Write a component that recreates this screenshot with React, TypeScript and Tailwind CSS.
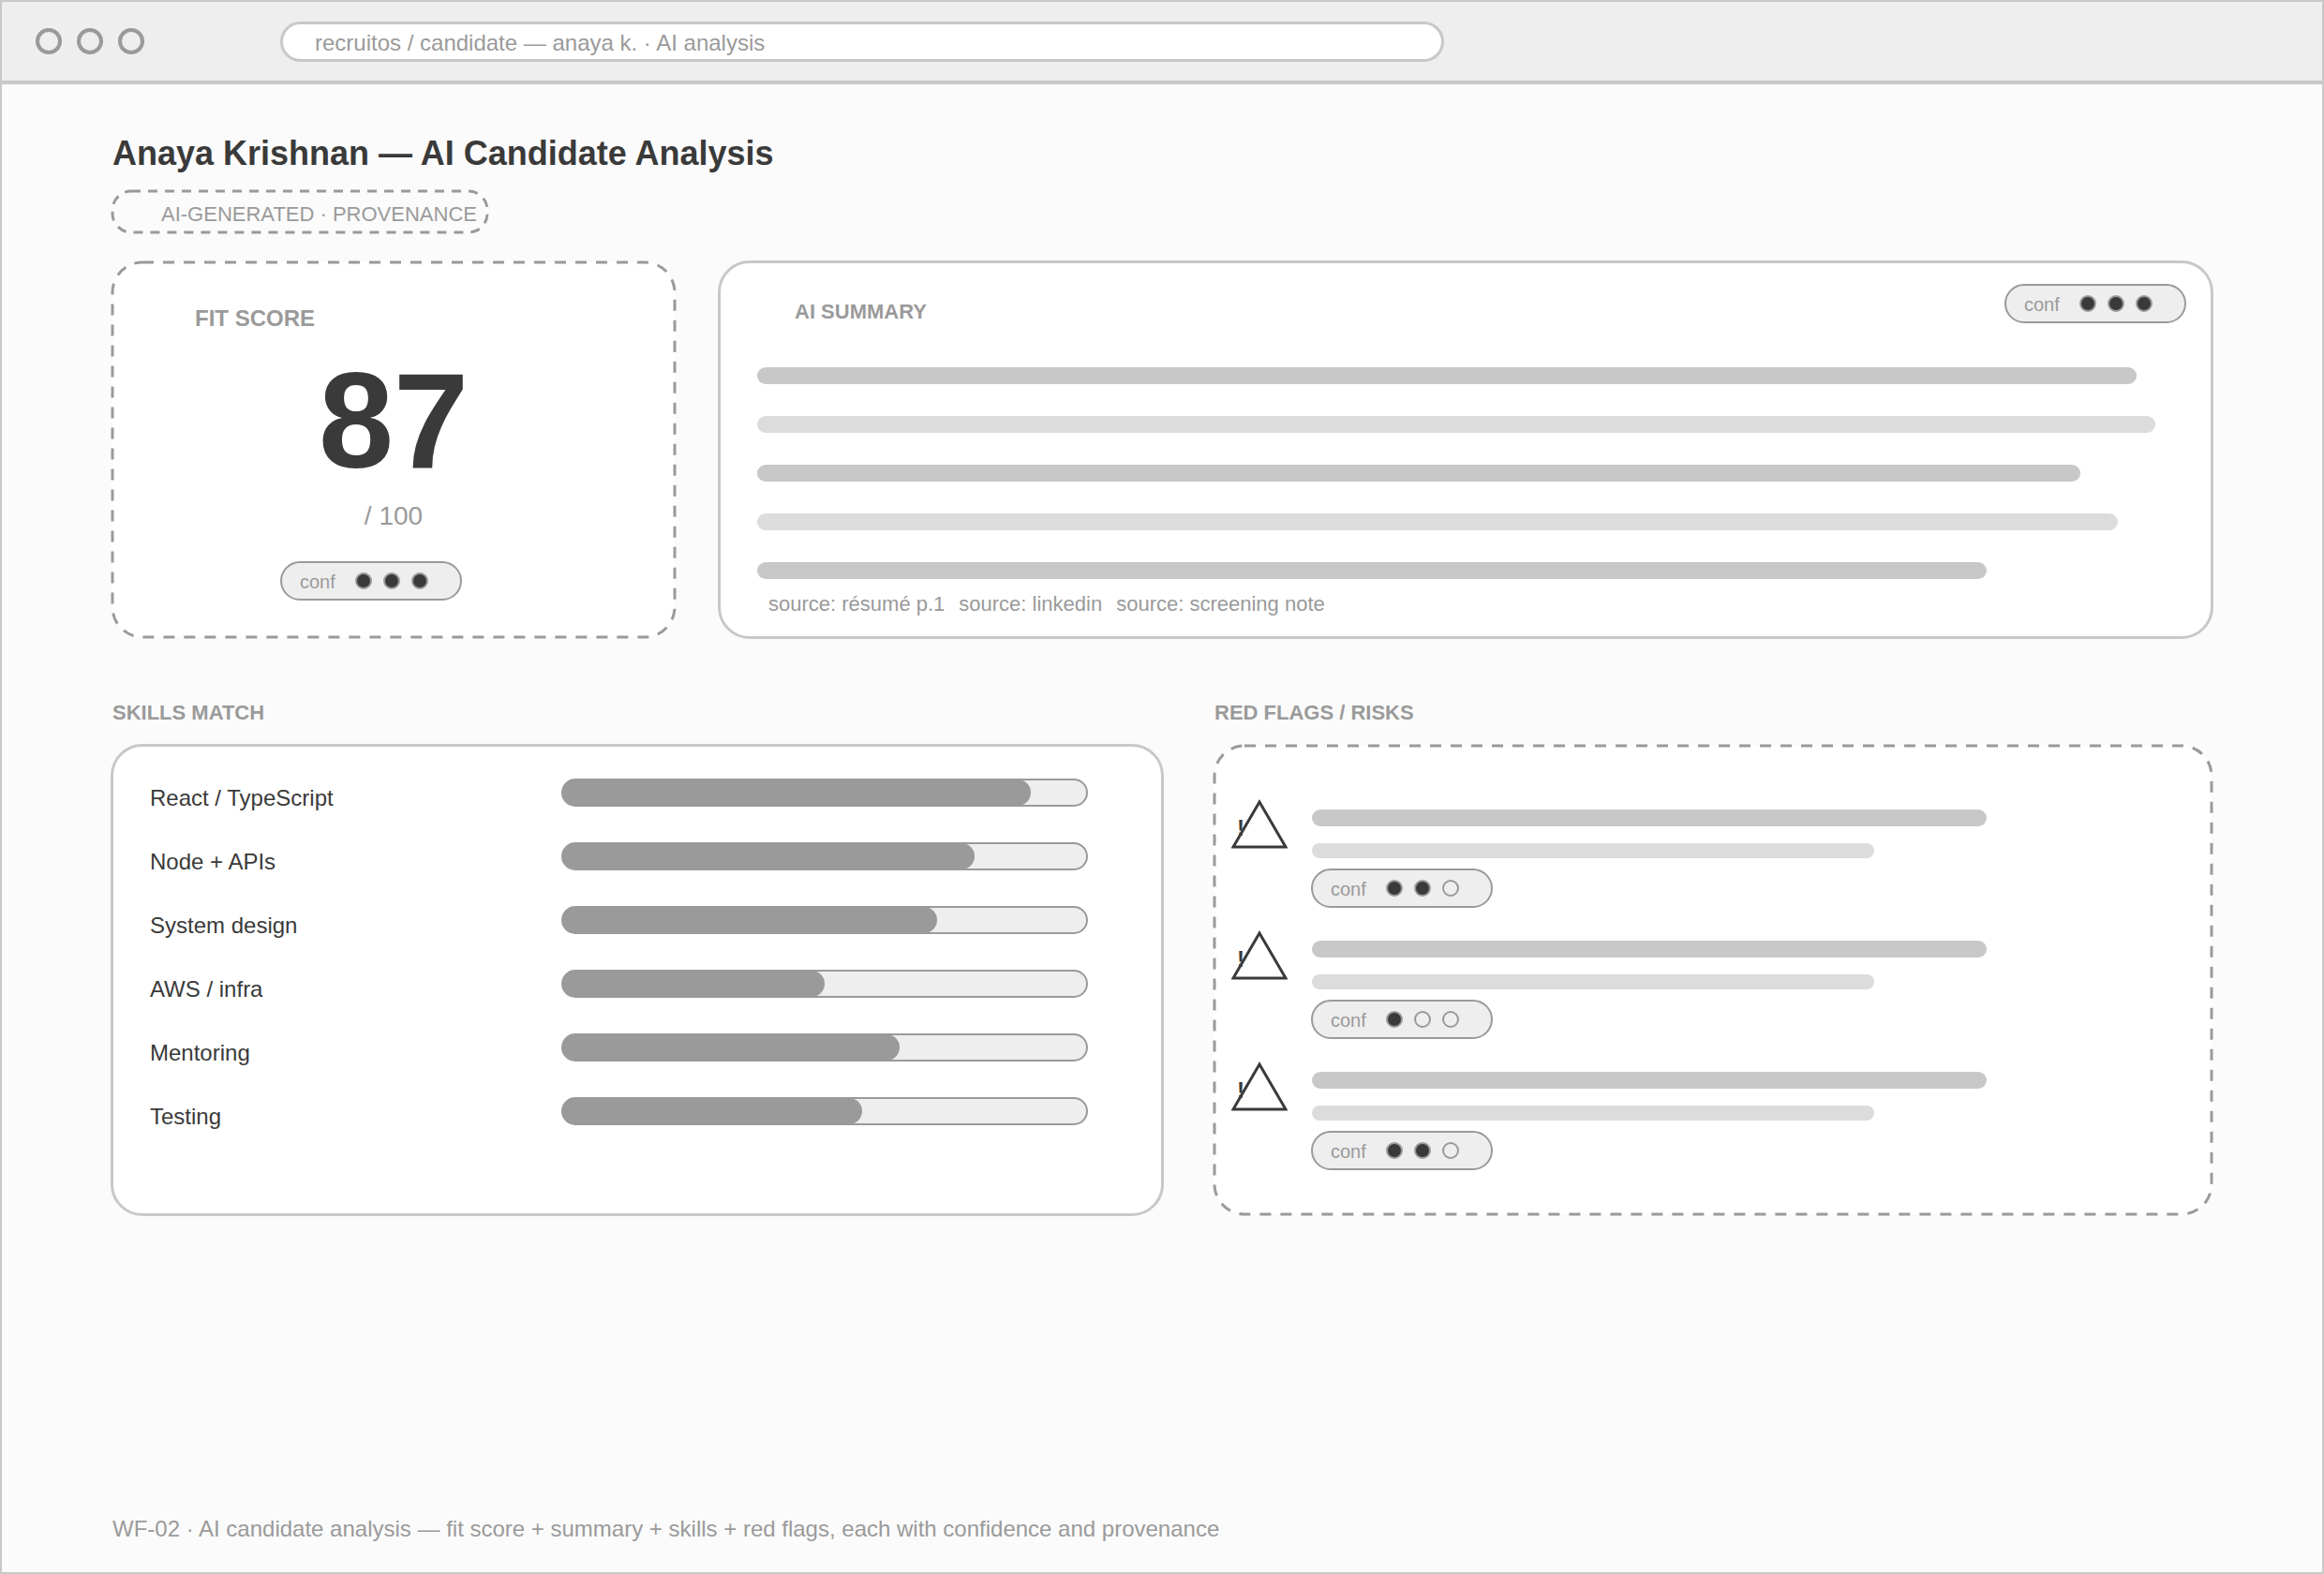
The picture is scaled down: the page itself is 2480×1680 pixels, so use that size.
import React from 'react';

type Level = 1 | 2 | 3;

interface Skill {
    name: string;
    score: number;
}

// Scores are out of SKILL_MAX
const SKILL_MAX = 560;

const skills: Skill[] = [
    { name: 'React / TypeScript', score: 500 },
    { name: 'Node + APIs', score: 440 },
    { name: 'System design', score: 400 },
    { name: 'AWS / infra', score: 280 },
    { name: 'Mentoring', score: 360 },
    { name: 'Testing', score: 320 },
];

const summaryLines = [
    'w-[1472px] bg-[#c8c8c8]',
    'w-[1492px] bg-[#dcdcdc]',
    'w-[1412px] bg-[#c8c8c8]',
    'w-[1452px] bg-[#dcdcdc]',
    'w-[1312px] bg-[#c8c8c8]',
];

const sources = ['source: résumé p.1', 'source: linkedin', 'source: screening note'];

const risks: Level[] = [2, 1, 2];

// Dashed outline for AI-generated blocks, CSS dashes are too short at this width
const DashedOutline: React.FC<{ radius: number; dash: string; fill?: string }> = ({ radius, dash, fill = 'none' }) => (
    <svg className="absolute inset-0 size-full overflow-visible" aria-hidden="true">
        <rect width="100%" height="100%" rx={radius} fill={fill} stroke="#9a9a9a" strokeWidth="3" strokeDasharray={dash} />
    </svg>
);

const Confidence: React.FC<{ level: Level }> = ({ level }) => (
    <div
        className="flex h-10 w-48 shrink-0 items-center rounded-full bg-[#eeeeee] pl-5 outline-2 -outline-offset-1 outline-[#9a9a9a]"
        role="group"
        aria-label={`Confidence ${level} of 3`}
    >
        <span className="w-[60px] pt-0.5 text-[20px] leading-6 text-[#9a9a9a]">conf</span>
        <div className="flex gap-3.5">
            {[1, 2, 3].map(n => (
                <span
                    key={n}
                    className={`size-4 rounded-full outline-2 -outline-offset-1 outline-[#9a9a9a] ${n <= level ? 'bg-[#3a3a3a]' : ''}`}
                />
            ))}
        </div>
    </div>
);

const WarningIcon: React.FC = () => (
    <svg width="60" height="56" viewBox="0 0 60 56" className="shrink-0" aria-hidden="true">
        <path d="M30 4 L58 52 H2 Z" fill="none" stroke="#3a3a3a" strokeWidth="3" />
        <text x="6" y="40" className="fill-[#3a3a3a] text-[24px] font-bold">!</text>
    </svg>
);

const BrowserBar: React.FC = () => (
    <header className="flex h-[88px] items-center border-b-4 border-[#c8c8c8] bg-[#eeeeee] px-9">
        <div className="flex shrink-0 gap-4">
            {[0, 1, 2].map(i => (
                <span key={i} className="size-7 rounded-full border-4 border-[#9a9a9a]" />
            ))}
        </div>
        <input
            type="text"
            aria-label="Address"
            readOnly
            value="recruitos / candidate — anaya k. · AI analysis"
            className="ml-[145px] h-[43px] w-[1242px] min-w-0 rounded-full border-3 border-[#c8c8c8] bg-white pt-1 pl-[34px] text-[24px] leading-7 text-[#9a9a9a] outline-none"
        />
    </header>
);

const FitScore: React.FC = () => (
    <section className="relative h-[400px]">
        <DashedOutline radius={32} dash="12 10" fill="#ffffff" />
        <div className="relative pt-[46px]">
            <h2 className="pl-[88px] text-[24px] leading-7 font-bold text-[#9a9a9a]">FIT SCORE</h2>
            <div className="mt-6 text-center text-[144px] leading-[144px] font-bold">87</div>
            <div className="mt-[13px] text-center text-[28px] leading-8 text-[#9a9a9a]">/ 100</div>
            <div className="mt-[33px] pl-[180px]">
                <Confidence level={3} />
            </div>
        </div>
    </section>
);

const Summary: React.FC = () => (
    <section className="h-[400px] rounded-[32px] bg-white outline-3 -outline-offset-1 outline-[#c8c8c8]">
        <div className="flex items-start justify-between pt-6 pr-7 pl-20">
            <h2 className="pt-[17px] text-[22px] leading-6 font-bold text-[#9a9a9a]">AI SUMMARY</h2>
            <Confidence level={3} />
        </div>
        <div className="mt-[47px] flex flex-col gap-[34px] px-10">
            {summaryLines.map((line, i) => (
                <div key={i} className={`h-[18px] max-w-full rounded-full ${line}`} />
            ))}
        </div>
        <div className="mt-[15px] flex gap-[15px] pl-[52px] text-[22px] leading-6 text-[#9a9a9a]">
            {sources.map(source => (
                <span key={source}>{source}</span>
            ))}
        </div>
    </section>
);

const SkillsMatch: React.FC = () => (
    <section>
        <h2 className="text-[22px] leading-6 font-bold text-[#9a9a9a]">SKILLS MATCH</h2>
        <ul className="mt-[23px] flex h-[500px] flex-col gap-10 rounded-[32px] bg-white pt-9 pr-20 pl-10 outline-3 -outline-offset-1 outline-[#c8c8c8]">
            {skills.map(skill => (
                <li key={skill.name} className="flex h-7 items-start">
                    <span className="w-[440px] shrink-0 pt-1.5 text-[24px] leading-7">{skill.name}</span>
                    <div
                        role="progressbar"
                        aria-label={skill.name}
                        aria-valuemax={SKILL_MAX}
                        aria-valuenow={skill.score}
                        className="h-7 flex-1 rounded-full bg-[#eeeeee] outline-2 -outline-offset-1 outline-[#9a9a9a]"
                    >
                        <div
                            className="h-full rounded-full bg-[#9a9a9a]"
                            style={{ width: `${(skill.score / SKILL_MAX) * 100}%` }}
                        />
                    </div>
                </li>
            ))}
        </ul>
    </section>
);

const RedFlags: React.FC = () => (
    <section>
        <h2 className="text-[22px] leading-6 font-bold text-[#9a9a9a]">RED FLAGS / RISKS</h2>
        <div className="relative mt-[23px] h-[500px]">
            <DashedOutline radius={32} dash="12 10" fill="#ffffff" />
            <ul className="relative flex flex-col gap-6 pt-14 pl-[18px]">
                {risks.map((level, i) => (
                    <li key={i} className="flex items-start gap-[26px]">
                        <WarningIcon />
                        <div className="min-w-0 flex-1 pt-3">
                            <div className="h-[18px] w-[720px] max-w-full rounded-full bg-[#c8c8c8]" />
                            <div className="mt-[18px] mb-3 h-4 w-[600px] max-w-full rounded-full bg-[#dcdcdc]" />
                            <Confidence level={level} />
                        </div>
                    </li>
                ))}
            </ul>
        </div>
    </section>
);

export default function App() {
    return (
        <div className="flex min-h-screen flex-col border-2 border-[#c8c8c8] bg-[#fbfbfb] font-['Liberation_Sans',Arial,sans-serif] text-[#3a3a3a]">
            <BrowserBar />
            <main className="flex-1 px-[118px] pt-[54px]">
                <h1 className="text-[36px] leading-10 font-bold">Anaya Krishnan — AI Candidate Analysis</h1>
                <div className="relative mt-5 h-11 w-[400px] pt-[13px] pl-[52px] text-[22px] leading-6 whitespace-nowrap text-[#9a9a9a]">
                    <DashedOutline radius={20} dash="10 8" />
                    AI-GENERATED · PROVENANCE
                </div>
                <div className="mt-8 grid grid-cols-[600fr_1592fr] gap-12">
                    <FitScore />
                    <Summary />
                </div>
                <div className="mt-[69px] grid grid-cols-[1120fr_1064fr] gap-14">
                    <SkillsMatch />
                    <RedFlags />
                </div>
            </main>
            <footer className="px-[118px] pb-8 text-[24px] leading-7 text-[#9a9a9a]">
                WF-02 · AI candidate analysis — fit score + summary + skills + red flags, each with confidence and provenance
            </footer>
        </div>
    );
}
